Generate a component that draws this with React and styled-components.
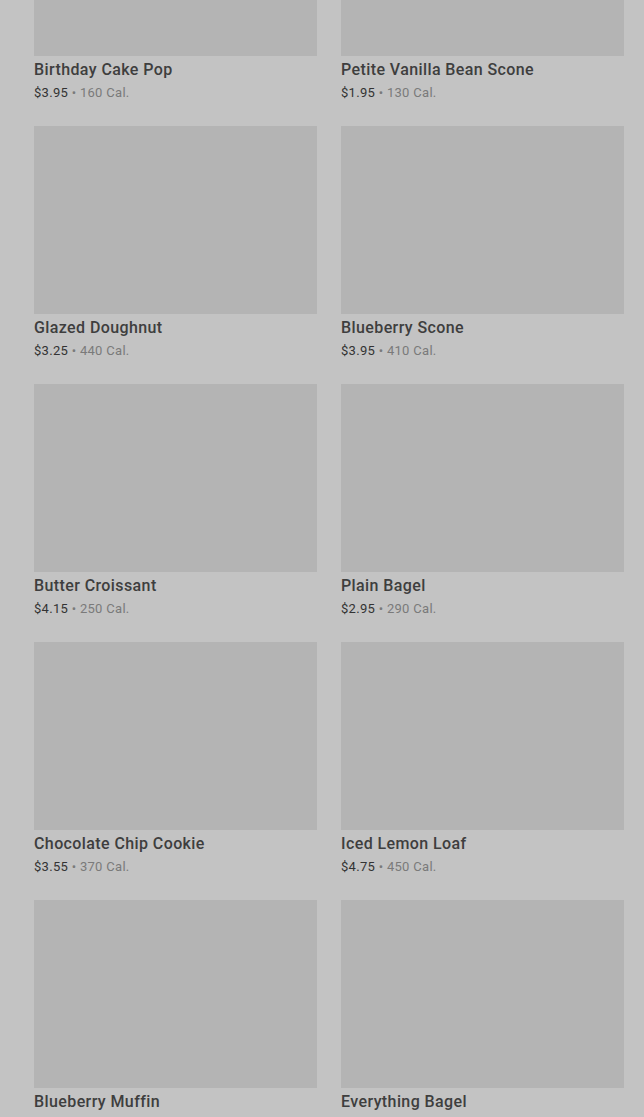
import React from 'react';
import styled, { createGlobalStyle } from 'styled-components';

const GlobalStyle = createGlobalStyle`
  html, body {
    margin: 0;
    padding: 0;
    background: #c3c3c3;
    overflow: hidden;
  }
  body {
    font-family: Roboto, "Liberation Sans", sans-serif;
    -webkit-font-smoothing: antialiased;
  }
`;

const Page = styled.div`
  height: 1117px;
  overflow: hidden;
  background: #c3c3c3;
`;

const Grid = styled.div`
  display: grid;
  grid-template-columns: 283px 283px;
  column-gap: 24px;
  row-gap: 24px;
  padding: 0 20px 0 34px;
  margin-top: -132px;
`;

const Card = styled.div`
  display: flex;
  flex-direction: column;
`;

const Photo = styled.div`
  height: 188px;
  background: #b4b4b4;
`;

const Title = styled.div`
  margin-top: 4px;
  font-size: 16px;
  line-height: 20px;
  font-weight: 500;
  color: #3e3e3e;
  letter-spacing: 0.4px;
`;

const Meta = styled.div`
  margin-top: 4px;
  font-size: 13px;
  line-height: 18px;
  color: #7a7a7a;
  letter-spacing: 0.3px;
`;

const Price = styled.span`
  color: #333;
`;

const items = [
  { name: 'Birthday Cake Pop', price: '$3.95', cal: 160 },
  { name: 'Petite Vanilla Bean Scone', price: '$1.95', cal: 130 },
  { name: 'Glazed Doughnut', price: '$3.25', cal: 440 },
  { name: 'Blueberry Scone', price: '$3.95', cal: 410 },
  { name: 'Butter Croissant', price: '$4.15', cal: 250 },
  { name: 'Plain Bagel', price: '$2.95', cal: 290 },
  { name: 'Chocolate Chip Cookie', price: '$3.55', cal: 370 },
  { name: 'Iced Lemon Loaf', price: '$4.75', cal: 450 },
  { name: 'Blueberry Muffin', price: '$3.25', cal: 360 },
  { name: 'Everything Bagel', price: '$2.95', cal: 300 },
];

export default function App() {
  return (
    <Page>
      <GlobalStyle />
      <Grid>
        {items.map((item) => (
          <Card key={item.name}>
            <Photo />
            <Title>{item.name}</Title>
            <Meta>
              <Price>{item.price}</Price> • {item.cal} Cal.
            </Meta>
          </Card>
        ))}
      </Grid>
    </Page>
  );
}
